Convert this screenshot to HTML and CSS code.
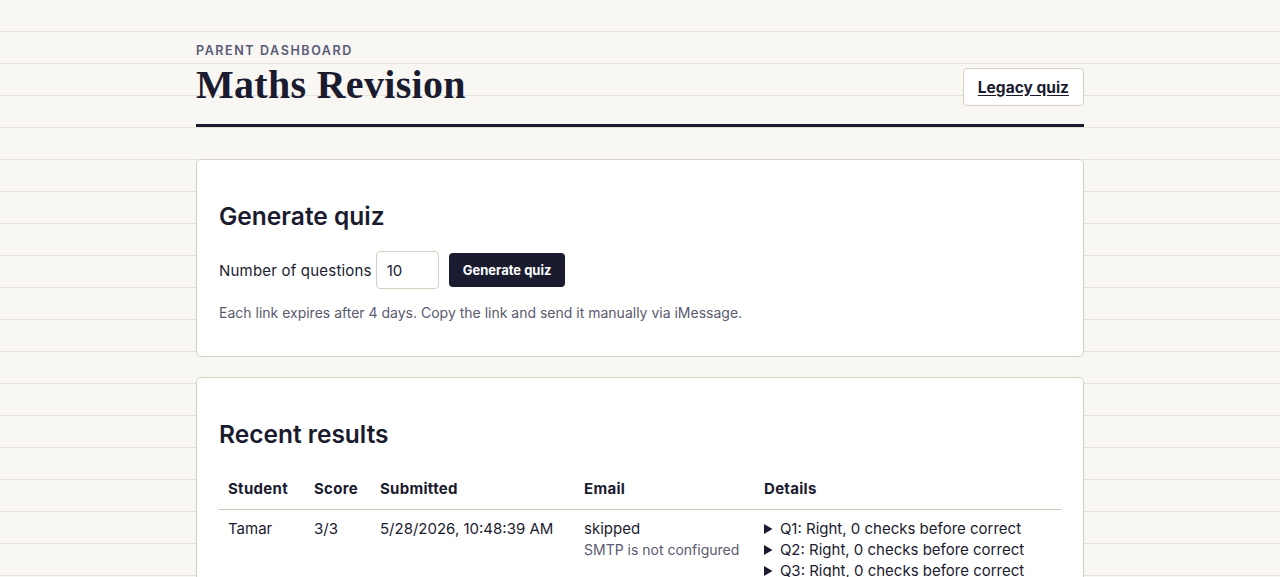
FILE: index.html
```html
<!DOCTYPE html>
<html lang="en">
<head>
<meta charset="utf-8">
<title>Maths Revision — Parent dashboard</title>
<link rel="stylesheet" href="styles.css">
</head>
<body>
<main class="page">
  <header class="masthead">
    <div class="masthead-titles">
      <p class="eyebrow">Parent dashboard</p>
      <h1 class="title">Maths Revision</h1>
    </div>
    <a class="btn-outline" href="#">Legacy quiz</a>
  </header>

  <section class="card">
    <h2 class="card-title">Generate quiz</h2>
    <form class="quiz-form">
      <label class="field-label" for="count">Number of questions</label>
      <input class="field-input" id="count" type="number" value="10">
      <button class="btn-dark" type="button">Generate quiz</button>
    </form>
    <p class="hint">Each link expires after 4 days. Copy the link and send it manually via iMessage.</p>
  </section>

  <section class="card">
    <h2 class="card-title">Recent results</h2>
    <table class="results">
      <thead>
        <tr>
          <th class="col-student">Student</th>
          <th class="col-score">Score</th>
          <th class="col-submitted">Submitted</th>
          <th class="col-email">Email</th>
          <th class="col-details">Details</th>
        </tr>
      </thead>
      <tbody>
        <tr>
          <td>Tamar</td>
          <td>3/3</td>
          <td>5/28/2026, 10:48:39 AM</td>
          <td>skipped<span class="muted">SMTP is not configured</span></td>
          <td>
            <details><summary>Q1: Right, 0 checks before correct</summary></details>
            <details><summary>Q2: Right, 0 checks before correct</summary></details>
            <details><summary>Q3: Right, 0 checks before correct</summary></details>
          </td>
        </tr>
        <tr>
          <td>Tamar</td>
          <td>8/10</td>
          <td>5/27/2026, 6:12:05 PM</td>
          <td>skipped<span class="muted">SMTP is not configured</span></td>
          <td>
            <details><summary>Q1: Right, 0 checks before correct</summary></details>
            <details><summary>Q2: Right, 1 check before correct</summary></details>
            <details><summary>Q3: Wrong, 2 checks before giving up</summary></details>
            <details><summary>Q4: Right, 0 checks before correct</summary></details>
          </td>
        </tr>
      </tbody>
    </table>
  </section>
</main>
</body>
</html>
```

FILE: styles.css
```css
* {
  box-sizing: border-box;
}

/* Ruled-paper backdrop: a faint line every 32px */
html {
  background-color: #f8f7f3;
  background-image: repeating-linear-gradient(
    to bottom,
    transparent 0,
    transparent 31px,
    #e7e4dd 31px,
    #e7e4dd 32px
  );
}

body {
  margin: 0;
  font-family: "Inter", "Noto Sans", sans-serif;
  font-size: 15px;
  line-height: 21px;
  color: #1b1b2f;
}

.page {
  max-width: 888px;
  margin: 0 auto;
  padding: 43px 0 40px;
}

/* Header */
.masthead {
  display: flex;
  justify-content: space-between;
  align-items: flex-end;
  padding-bottom: 16px;
  border-bottom: 3px solid #1b1b2f;
  margin-bottom: 32px;
}

.eyebrow {
  margin: 0;
  font-size: 12.5px;
  line-height: 16px;
  font-weight: 600;
  letter-spacing: 1.6px;
  text-transform: uppercase;
  color: #5a5a76;
}

.title {
  margin: 3px 0 0;
  font-family: "Liberation Serif", "DejaVu Serif", serif;
  font-size: 40px;
  line-height: 46px;
  font-weight: 700;
  letter-spacing: 0.3px;
  color: #1b1b2f;
}

.btn-outline {
  display: inline-flex;
  align-items: center;
  height: 38px;
  padding: 0 14px;
  margin-bottom: 2px;
  background: #fff;
  border: 1px solid #d6d0c2;
  border-radius: 4px;
  font-weight: 700;
  font-size: 15.5px;
  color: #1b1b2f;
  text-decoration: underline;
  text-underline-offset: 2px;
}

/* Cards */
.card {
  background: #fff;
  border: 1px solid #d6d0c2;
  border-radius: 5px;
  padding: 40px 22px 33px;
  margin-bottom: 20px;
}

.card-title {
  margin: 0 0 19px;
  font-size: 24.5px;
  line-height: 32px;
  font-weight: 600;
  color: #1b1b2f;
}

/* Quiz form */
.quiz-form {
  display: flex;
  align-items: center;
}

.field-label {
  margin-right: 4px;
  letter-spacing: 0.2px;
}

.field-input {
  width: 63px;
  height: 38px;
  padding: 0 10px;
  border: 1px solid #d6d0c2;
  border-radius: 4px;
  font: inherit;
  color: #1b1b2f;
  -moz-appearance: textfield;
}

.field-input::-webkit-inner-spin-button,
.field-input::-webkit-outer-spin-button {
  -webkit-appearance: none;
  margin: 0;
}

.btn-dark {
  margin-left: 10px;
  height: 34px;
  padding: 0 14px;
  border: 0;
  border-radius: 4px;
  background: #1b1b2f;
  color: #fff;
  font-family: inherit;
  font-size: 13px;
  font-weight: 700;
}

.hint {
  margin: 14px 0 0;
  font-size: 14px;
  line-height: 20px;
  color: #5a5a70;
}

/* Results table */
.results {
  width: 100%;
  border-collapse: collapse;
}

.results th {
  text-align: left;
  font-weight: 700;
  padding: 10px 9px;
  line-height: 20px;
  letter-spacing: 0.3px;
  border-bottom: 1px solid #cbc4b0;
}

.results td {
  vertical-align: top;
  padding: 8px 9px 10px;
  line-height: 21px;
}

.col-student { width: 86px; }
.col-score { width: 66px; }
.col-submitted { width: 204px; }
.col-email { width: 180px; }

.muted {
  display: block;
  font-size: 14px;
  color: #5a5a70;
}

.results summary {
  cursor: pointer;
}
```
